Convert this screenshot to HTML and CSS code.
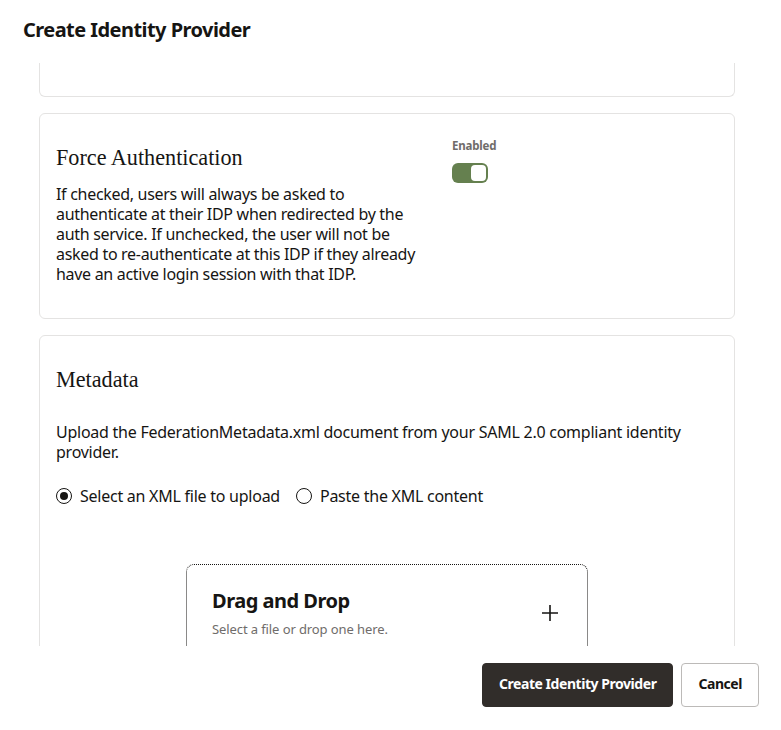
FILE: index.html
```html
<!DOCTYPE html>
<html>
<head>
<meta charset="utf-8">
<link rel="stylesheet" href="styles.css">
</head>
<body>
<div class="dialog">
  <header class="dlg-header"><h1 class="dlg-title">Create Identity Provider</h1></header>
  <main class="dlg-body">
    <section class="card card-tail"></section>

    <section class="card">
      <div class="split">
        <div class="split-main">
          <h2 class="card-title">Force Authentication</h2>
          <p class="card-text">If checked, users will always be asked to authenticate at their IDP when redirected by the auth service. If unchecked, the user will not be asked to re-authenticate at this IDP if they already have an active login session with that IDP.</p>
        </div>
        <div class="split-side">
          <div class="field-label">Enabled</div>
          <div class="switch"><span class="switch-knob"></span></div>
        </div>
      </div>
    </section>

    <section class="card">
      <h2 class="card-title meta-title">Metadata</h2>
      <p class="card-text meta-text">Upload the FederationMetadata.xml document from your SAML 2.0 compliant identity provider.</p>
      <div class="radios">
        <label class="radio"><span class="radio-dot checked"></span>Select an XML file to upload</label>
        <label class="radio"><span class="radio-dot"></span>Paste the XML content</label>
      </div>
      <div class="dropzone">
        <div class="dz-text">
          <div class="dz-title">Drag and Drop</div>
          <div class="dz-sub">Select a file or drop one here.</div>
        </div>
        <svg class="dz-plus" width="16" height="16" viewBox="0 0 16 16"><path d="M8 0v16M0 8h16" stroke="#161513" stroke-width="1.6" fill="none"/></svg>
      </div>
    </section>
  </main>
  <footer class="dlg-footer">
    <button class="btn btn-primary">Create Identity Provider</button>
    <button class="btn btn-secondary">Cancel</button>
  </footer>
</div>
</body>
</html>
```

FILE: styles.css
```css
html, body {
  margin: 0;
  padding: 0;
  background: #fff;
}
body {
  font-family: "Noto Sans", "Open Sans", sans-serif;
  color: #161513;
  width: 781px;
  height: 730px;
  overflow: hidden;
}
.dialog {
  display: flex;
  flex-direction: column;
  height: 730px;
}
.dlg-header {
  height: 63px;
  padding: 0 23px;
  display: flex;
  align-items: center;
  box-sizing: border-box;
}
.dlg-title {
  margin: 0;
  font-size: 20px;
  font-weight: 700;
  letter-spacing: -0.55px;
  position: relative;
  top: -2px;
}
.dlg-body {
  height: 583px;
  overflow: hidden;
  padding: 0 46px 0 39px;
  display: flex;
  flex-direction: column;
  gap: 16px;
}
.card {
  border: 1px solid #e4e3e2;
  border-radius: 6px;
  padding: 16px;
  flex: none;
}
.card-tail {
  border-top: none;
  border-top-left-radius: 0;
  border-top-right-radius: 0;
  height: 34px;
  padding: 0;
  box-sizing: border-box;
}
.split {
  display: grid;
  grid-template-columns: 366px 1fr;
  column-gap: 30px;
}
.split-main {
  padding-top: 16px;
  padding-bottom: 18px;
}
.card-title {
  margin: 0;
  font-family: "Liberation Serif", "DejaVu Serif", serif;
  font-weight: 400;
  font-size: 22.2px;
  line-height: 24px;
}
.card-text {
  margin: 14px 0 0;
  font-size: 16px;
  line-height: 20px;
  letter-spacing: -0.3px;
}
.split-side {
  padding-top: 8px;
}
.field-label {
  font-size: 11.5px;
  font-weight: 700;
  color: #6f6c6a;
  line-height: 16px;
  letter-spacing: -0.2px;
}
.switch {
  margin-top: 9px;
  width: 36px;
  height: 20px;
  border-radius: 6px;
  background: #65804f;
  display: flex;
  align-items: center;
  justify-content: flex-end;
  padding: 2px;
  box-sizing: border-box;
}
.switch-knob {
  width: 15px;
  height: 16px;
  border-radius: 4px;
  background: #fff;
}
.meta-title {
  margin-top: 16px;
}
.meta-text {
  margin-top: 30px;
  letter-spacing: -0.25px;
}
.radios {
  display: flex;
  gap: 16px;
  margin-top: 24px;
}
.radio {
  display: flex;
  align-items: center;
  gap: 8px;
  font-size: 16px;
  line-height: 20px;
  letter-spacing: -0.25px;
}
.radio-dot {
  width: 16px;
  height: 16px;
  border: 1.5px solid #161513;
  border-radius: 50%;
  box-sizing: border-box;
  display: flex;
  align-items: center;
  justify-content: center;
}
.radio-dot.checked::after {
  content: "";
  width: 8px;
  height: 8px;
  border-radius: 50%;
  background: #161513;
}
.dropzone {
  margin: 58px auto 0;
  width: 402px;
  height: 120px;
  box-sizing: border-box;
  border: 1px dotted #161513;
  border-radius: 8px;
  padding: 24px 29px 0 25px;
  display: flex;
  justify-content: space-between;
  align-items: flex-start;
}
.dz-title {
  font-size: 20px;
  font-weight: 700;
  line-height: 24px;
  letter-spacing: -0.5px;
}
.dz-sub {
  margin-top: 7px;
  font-size: 13px;
  line-height: 18px;
  color: #6f6c6a;
  letter-spacing: -0.1px;
}
.dz-plus {
  margin-top: 16px;
}
.dlg-footer {
  flex: 1;
  display: flex;
  justify-content: flex-end;
  align-items: flex-start;
  padding: 17px 22px 0 0;
  gap: 8px;
}
.btn {
  height: 44px;
  border-radius: 4px;
  font-family: "Noto Sans", "Open Sans", sans-serif;
  font-size: 14px;
  font-weight: 700;
  letter-spacing: -0.45px;
  padding: 0 16px 3px;
  cursor: pointer;
}
.btn-primary {
  background: #312d2a;
  color: #fff;
  border: 1px solid #312d2a;
}
.btn-secondary {
  background: #fff;
  color: #161513;
  border: 1px solid #bcbab8;
}
```
